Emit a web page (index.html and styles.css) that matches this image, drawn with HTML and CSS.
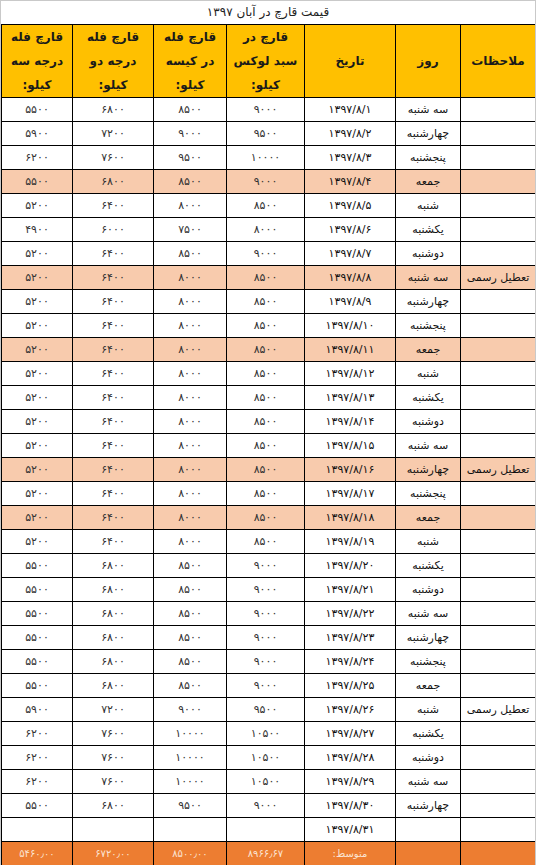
FILE: index.html
```html
<!DOCTYPE html>
<html lang="fa">
<head>
<meta charset="utf-8">
<title>قیمت قارچ در آبان ۱۳۹۷</title>
<link rel="stylesheet" href="styles.css">
</head>
<body>
<div class="sheet">
  <div class="title">قیمت قارچ در آبان ۱۳۹۷</div>
  <table class="grid" dir="rtl">
    <colgroup>
      <col class="c-note">
      <col class="c-day">
      <col class="c-date">
      <col class="c-lux">
      <col class="c-bag">
      <col class="c-g2">
      <col class="c-g3">
    </colgroup>
    <thead>
      <tr class="head">
        <th>ملاحظات</th>
        <th>روز</th>
        <th>تاریخ</th>
        <th class="multi"><span>قارچ در</span><span>سبد لوکس</span><span>کیلو:</span></th>
        <th class="multi"><span>قارچ فله</span><span>در کیسه</span><span>کیلو:</span></th>
        <th class="multi"><span>قارچ فله</span><span>درجه دو</span><span>کیلو:</span></th>
        <th class="multi"><span>قارچ فله</span><span>درجه سه</span><span>کیلو:</span></th>
      </tr>
    </thead>
    <tbody>
      <tr><td></td><td class="day">سه شنبه</td><td class="date"><bdi dir="ltr">۱۳۹۷/۸/۱</bdi></td><td class="num">۹۰۰۰</td><td class="num">۸۵۰۰</td><td class="num">۶۸۰۰</td><td class="num">۵۵۰۰</td></tr>
      <tr><td></td><td class="day">چهارشنبه</td><td class="date"><bdi dir="ltr">۱۳۹۷/۸/۲</bdi></td><td class="num">۹۵۰۰</td><td class="num">۹۰۰۰</td><td class="num">۷۲۰۰</td><td class="num">۵۹۰۰</td></tr>
      <tr><td></td><td class="day">پنجشنبه</td><td class="date"><bdi dir="ltr">۱۳۹۷/۸/۳</bdi></td><td class="num">۱۰۰۰۰</td><td class="num">۹۵۰۰</td><td class="num">۷۶۰۰</td><td class="num">۶۲۰۰</td></tr>
      <tr class="off"><td></td><td class="day">جمعه</td><td class="date"><bdi dir="ltr">۱۳۹۷/۸/۴</bdi></td><td class="num">۹۰۰۰</td><td class="num">۸۵۰۰</td><td class="num">۶۸۰۰</td><td class="num">۵۵۰۰</td></tr>
      <tr><td></td><td class="day">شنبه</td><td class="date"><bdi dir="ltr">۱۳۹۷/۸/۵</bdi></td><td class="num">۸۵۰۰</td><td class="num">۸۰۰۰</td><td class="num">۶۴۰۰</td><td class="num">۵۲۰۰</td></tr>
      <tr><td></td><td class="day">یکشنبه</td><td class="date"><bdi dir="ltr">۱۳۹۷/۸/۶</bdi></td><td class="num">۸۰۰۰</td><td class="num">۷۵۰۰</td><td class="num">۶۰۰۰</td><td class="num">۴۹۰۰</td></tr>
      <tr><td></td><td class="day">دوشنبه</td><td class="date"><bdi dir="ltr">۱۳۹۷/۸/۷</bdi></td><td class="num">۹۰۰۰</td><td class="num">۸۵۰۰</td><td class="num">۶۴۰۰</td><td class="num">۵۲۰۰</td></tr>
      <tr class="off"><td class="note">تعطیل رسمی</td><td class="day">سه شنبه</td><td class="date"><bdi dir="ltr">۱۳۹۷/۸/۸</bdi></td><td class="num">۸۵۰۰</td><td class="num">۸۰۰۰</td><td class="num">۶۴۰۰</td><td class="num">۵۲۰۰</td></tr>
      <tr><td></td><td class="day">چهارشنبه</td><td class="date"><bdi dir="ltr">۱۳۹۷/۸/۹</bdi></td><td class="num">۸۵۰۰</td><td class="num">۸۰۰۰</td><td class="num">۶۴۰۰</td><td class="num">۵۲۰۰</td></tr>
      <tr><td></td><td class="day">پنجشنبه</td><td class="date"><bdi dir="ltr">۱۳۹۷/۸/۱۰</bdi></td><td class="num">۸۵۰۰</td><td class="num">۸۰۰۰</td><td class="num">۶۴۰۰</td><td class="num">۵۲۰۰</td></tr>
      <tr class="off"><td></td><td class="day">جمعه</td><td class="date"><bdi dir="ltr">۱۳۹۷/۸/۱۱</bdi></td><td class="num">۸۵۰۰</td><td class="num">۸۰۰۰</td><td class="num">۶۴۰۰</td><td class="num">۵۲۰۰</td></tr>
      <tr><td></td><td class="day">شنبه</td><td class="date"><bdi dir="ltr">۱۳۹۷/۸/۱۲</bdi></td><td class="num">۸۵۰۰</td><td class="num">۸۰۰۰</td><td class="num">۶۴۰۰</td><td class="num">۵۲۰۰</td></tr>
      <tr><td></td><td class="day">یکشنبه</td><td class="date"><bdi dir="ltr">۱۳۹۷/۸/۱۳</bdi></td><td class="num">۸۵۰۰</td><td class="num">۸۰۰۰</td><td class="num">۶۴۰۰</td><td class="num">۵۲۰۰</td></tr>
      <tr><td></td><td class="day">دوشنبه</td><td class="date"><bdi dir="ltr">۱۳۹۷/۸/۱۴</bdi></td><td class="num">۸۵۰۰</td><td class="num">۸۰۰۰</td><td class="num">۶۴۰۰</td><td class="num">۵۲۰۰</td></tr>
      <tr><td></td><td class="day">سه شنبه</td><td class="date"><bdi dir="ltr">۱۳۹۷/۸/۱۵</bdi></td><td class="num">۸۵۰۰</td><td class="num">۸۰۰۰</td><td class="num">۶۴۰۰</td><td class="num">۵۲۰۰</td></tr>
      <tr class="off"><td class="note">تعطیل رسمی</td><td class="day">چهارشنبه</td><td class="date"><bdi dir="ltr">۱۳۹۷/۸/۱۶</bdi></td><td class="num">۸۵۰۰</td><td class="num">۸۰۰۰</td><td class="num">۶۴۰۰</td><td class="num">۵۲۰۰</td></tr>
      <tr><td></td><td class="day">پنجشنبه</td><td class="date"><bdi dir="ltr">۱۳۹۷/۸/۱۷</bdi></td><td class="num">۸۵۰۰</td><td class="num">۸۰۰۰</td><td class="num">۶۴۰۰</td><td class="num">۵۲۰۰</td></tr>
      <tr class="off"><td></td><td class="day">جمعه</td><td class="date"><bdi dir="ltr">۱۳۹۷/۸/۱۸</bdi></td><td class="num">۸۵۰۰</td><td class="num">۸۰۰۰</td><td class="num">۶۴۰۰</td><td class="num">۵۲۰۰</td></tr>
      <tr><td></td><td class="day">شنبه</td><td class="date"><bdi dir="ltr">۱۳۹۷/۸/۱۹</bdi></td><td class="num">۸۵۰۰</td><td class="num">۸۰۰۰</td><td class="num">۶۴۰۰</td><td class="num">۵۲۰۰</td></tr>
      <tr><td></td><td class="day">یکشنبه</td><td class="date"><bdi dir="ltr">۱۳۹۷/۸/۲۰</bdi></td><td class="num">۹۰۰۰</td><td class="num">۸۵۰۰</td><td class="num">۶۸۰۰</td><td class="num">۵۵۰۰</td></tr>
      <tr><td></td><td class="day">دوشنبه</td><td class="date"><bdi dir="ltr">۱۳۹۷/۸/۲۱</bdi></td><td class="num">۹۰۰۰</td><td class="num">۸۵۰۰</td><td class="num">۶۸۰۰</td><td class="num">۵۵۰۰</td></tr>
      <tr><td></td><td class="day">سه شنبه</td><td class="date"><bdi dir="ltr">۱۳۹۷/۸/۲۲</bdi></td><td class="num">۹۰۰۰</td><td class="num">۸۵۰۰</td><td class="num">۶۸۰۰</td><td class="num">۵۵۰۰</td></tr>
      <tr><td></td><td class="day">چهارشنبه</td><td class="date"><bdi dir="ltr">۱۳۹۷/۸/۲۳</bdi></td><td class="num">۹۰۰۰</td><td class="num">۸۵۰۰</td><td class="num">۶۸۰۰</td><td class="num">۵۵۰۰</td></tr>
      <tr><td></td><td class="day">پنجشنبه</td><td class="date"><bdi dir="ltr">۱۳۹۷/۸/۲۴</bdi></td><td class="num">۹۰۰۰</td><td class="num">۸۵۰۰</td><td class="num">۶۸۰۰</td><td class="num">۵۵۰۰</td></tr>
      <tr><td></td><td class="day">جمعه</td><td class="date"><bdi dir="ltr">۱۳۹۷/۸/۲۵</bdi></td><td class="num">۹۰۰۰</td><td class="num">۸۵۰۰</td><td class="num">۶۸۰۰</td><td class="num">۵۵۰۰</td></tr>
      <tr><td class="note">تعطیل رسمی</td><td class="day">شنبه</td><td class="date"><bdi dir="ltr">۱۳۹۷/۸/۲۶</bdi></td><td class="num">۹۵۰۰</td><td class="num">۹۰۰۰</td><td class="num">۷۲۰۰</td><td class="num">۵۹۰۰</td></tr>
      <tr><td></td><td class="day">یکشنبه</td><td class="date"><bdi dir="ltr">۱۳۹۷/۸/۲۷</bdi></td><td class="num">۱۰۵۰۰</td><td class="num">۱۰۰۰۰</td><td class="num">۷۶۰۰</td><td class="num">۶۲۰۰</td></tr>
      <tr><td></td><td class="day">دوشنبه</td><td class="date"><bdi dir="ltr">۱۳۹۷/۸/۲۸</bdi></td><td class="num">۱۰۵۰۰</td><td class="num">۱۰۰۰۰</td><td class="num">۷۶۰۰</td><td class="num">۶۲۰۰</td></tr>
      <tr><td></td><td class="day">سه شنبه</td><td class="date"><bdi dir="ltr">۱۳۹۷/۸/۲۹</bdi></td><td class="num">۱۰۵۰۰</td><td class="num">۱۰۰۰۰</td><td class="num">۷۶۰۰</td><td class="num">۶۲۰۰</td></tr>
      <tr><td></td><td class="day">چهارشنبه</td><td class="date"><bdi dir="ltr">۱۳۹۷/۸/۳۰</bdi></td><td class="num">۹۰۰۰</td><td class="num">۹۵۰۰</td><td class="num">۶۸۰۰</td><td class="num">۵۵۰۰</td></tr>
      <tr><td></td><td class="day"></td><td class="date"><bdi dir="ltr">۱۳۹۷/۸/۳۱</bdi></td><td class="num"></td><td class="num"></td><td class="num"></td><td class="num"></td></tr>
    </tbody>
    <tfoot>
      <tr class="avg"><td></td><td></td><td>متوسط:</td><td><bdi dir="ltr">۸۹۶۶٫۶۷</bdi></td><td><bdi dir="ltr">۸۵۰۰٫۰۰</bdi></td><td><bdi dir="ltr">۶۷۲۰٫۰۰</bdi></td><td><bdi dir="ltr">۵۴۶۰٫۰۰</bdi></td></tr>
    </tfoot>
  </table>
</div>
</body>
</html>
```

FILE: styles.css
```css
html, body {
  margin: 0;
  padding: 0;
  background: #ffffff;
}

.sheet {
  width: 536px;
  height: 865px;
  box-sizing: border-box;
  border-top: 1px solid #c9c9c9;
  border-left: 1px solid #c9c9c9;
  border-right: 1px solid #c9c9c9;
  font-family: "DejaVu Sans", "Noto Sans", sans-serif;
  color: #111;
  overflow: hidden;
}

.title {
  height: 23px;
  line-height: 23px;
  text-align: center;
  direction: rtl;
  font-size: 12px;
  color: #222;
}

.grid {
  border-collapse: collapse;
  table-layout: fixed;
  width: 534px;
}

.c-note { width: 75px; }
.c-day { width: 65px; }
.c-date { width: 91px; }
.c-lux { width: 78px; }
.c-bag { width: 73px; }
.c-g2 { width: 81px; }
.c-g3 { width: 71px; }

.grid th,
.grid td {
  border: 1px solid #000;
  padding: 0;
  text-align: center;
  vertical-align: middle;
  white-space: nowrap;
  overflow: hidden;
}

.grid td {
  height: 23px;
  font-size: 11px;
}

.head th {
  height: 71px;
  background: #ffc000;
  font-size: 12px;
  font-weight: bold;
  color: #1a1a1a;
}

.multi span {
  display: block;
  line-height: 24px;
}

.off td {
  background: #f8cbad;
}

.day {
  font-size: 11px;
}

.note {
  font-size: 11px;
}

.date {
  font-size: 11px;
}

.num {
  font-size: 10px;
  color: #333;
}

.avg td {
  background: #ed7d31;
  color: #fbe3d3;
  font-size: 10px;
}
```
